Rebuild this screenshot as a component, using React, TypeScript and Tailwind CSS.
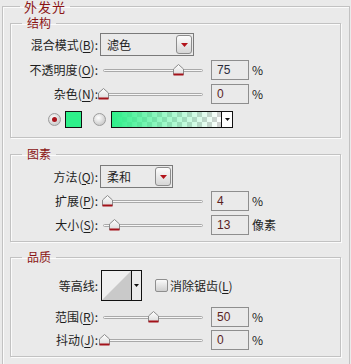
import React from "react";

const FONT = "font-['Noto_Sans_CJK_SC','Noto_Sans',sans-serif]";

const Key = ({ k }: { k: string }) => <span className="underline underline-offset-2">{k}</span>;

const Label = ({ text, k }: { text: string; k?: string }) => (
    <div className="w-[87px] shrink-0 text-right text-[12px] leading-none text-[#1e1e1e]">
        {text}
        {k ? <>(<Key k={k} />)</> : null}:
    </div>
);

const DropButton = () => (
    <div className="w-[16px] h-[19px] mr-[1px] rounded-[3px] border border-[#8c8c8c] bg-linear-to-b from-[#fdfdfd] to-[#d6d6d6] flex items-center justify-center">
        <svg width="7" height="4" viewBox="0 0 7 4">
            <polygon points="0,0 7,0 3.5,4" fill="#b3141b" />
        </svg>
    </div>
);

const Select = ({ value, w }: { value: string; w: string }) => (
    <div className={`${w} ml-[2px] h-[23px] border border-[#7a7a7a] flex items-center justify-between pl-[6px]`}>
        <span className="text-[12px] text-[#1e1e1e]">{value}</span>
        <DropButton />
    </div>
);

const Thumb = () => (
    <svg width="11" height="12" viewBox="0 0 11 12">
        <defs>
            <linearGradient id="tg" x1="0" y1="0" x2="0" y2="1">
                <stop offset="0" stopColor="#ffffff" />
                <stop offset="1" stopColor="#dcdcdc" />
            </linearGradient>
        </defs>
        <polygon points="5.5,0.5 10.5,5 10.5,10.5 0.5,10.5 0.5,5" fill="url(#tg)" stroke="#8a8a8a" />
        <rect x="0.5" y="9.5" width="10" height="2" fill="#a3121a" />
    </svg>
);

const Slider = ({ pos }: { pos: number }) => (
    <div className="relative ml-[1px] w-[108px] h-[20px] shrink-0 flex items-center">
        <div className="ml-[4px] w-[100px] h-[3px] rounded-full border border-[#a9a9a9] bg-[#f6f6f6]" />
        <div className="absolute top-[4px]" style={{ left: pos - 5 }}>
            <Thumb />
        </div>
    </div>
);

const NumBox = ({ value, unit, dark }: { value: string; unit: string; dark?: boolean }) => (
    <>
        <div className={`ml-[4px] w-[38px] h-[20px] border border-[#8e8e8e] flex items-center pl-[5px] text-[12px] font-['Liberation_Sans',sans-serif] ${dark ? "text-[#2a2d3d]" : "text-[#5a1f1f]"}`}>
            {value}
        </div>
        <span className="ml-[3px] text-[12px] text-[#1e1e1e]">{unit}</span>
    </>
);

const SliderRow = ({ text, k, pos, value, unit, dark, cls }: { text: string; k: string; pos: number; value: string; unit: string; dark?: boolean; cls: string }) => (
    <div className={`flex items-center h-[20px] ${cls}`}>
        <Label text={text} k={k} />
        <Slider pos={pos} />
        <NumBox value={value} unit={unit} dark={dark} />
    </div>
);

const Radio = ({ on }: { on?: boolean }) => (
    <div className="w-[13px] h-[13px] rounded-full border border-[#9c9c9c] bg-[radial-gradient(circle_at_40%_35%,#ffffff,#b9b9b9)] flex items-center justify-center">
        {on && <div className="w-[5px] h-[5px] rounded-full bg-[#a8141c]" />}
    </div>
);

const Group = ({ title, cls, children }: { title: string; cls: string; children: React.ReactNode }) => (
    <fieldset className={`border border-[#c2c2c2] shadow-[inset_1px_1px_0_#fbfbfb,1px_1px_0_#fbfbfb] ${cls}`}>
        <legend className="ml-[11px] px-[5px] text-[12px] leading-[12px] text-[#8a1414]">{title}</legend>
        {children}
    </fieldset>
);

export default function App() {
    return (
        <div className={`w-[351px] h-[364px] overflow-hidden bg-[#eaeaea] ${FONT}`}>
            <fieldset className="ml-[2px] w-[348px] h-[380px] border border-[#c2c2c2] shadow-[inset_1px_1px_0_#fbfbfb] pl-[7px]">
                <legend className="ml-[10px] px-[4px] text-[13px] leading-[13px] tracking-[1px] text-[#8a1414]">外发光</legend>

                <Group title="结构" cls="mt-[4px] w-[331px] pb-[9px]">
                    <div className="mt-[4px] flex items-center h-[23px]">
                        <Label text="混合模式" k="B" />
                        <Select value="滤色" w="w-[94px]" />
                    </div>
                    <SliderRow cls="mt-[4px]" text="不透明度" k="O" pos={79} value="75" unit="%" dark />
                    <SliderRow cls="mt-[4px]" text="杂色" k="N" pos={4} value="0" unit="%" />
                    <div className="mt-[7px] h-[17px] flex items-center">
                        <div className="ml-[37px]"><Radio on /></div>
                        <div className="ml-[4px] w-[17px] h-[17px] border border-[#111] bg-[#2ef08a]" />
                        <div className="ml-[11px]"><Radio /></div>
                        <div className="ml-[5px] w-[122px] h-[17px] border border-[#111] flex">
                            <div className="flex-1 bg-[repeating-conic-gradient(#d2d2d2_0_25%,#ffffff_0_50%)] bg-[length:10px_10px]">
                                <div className="h-full bg-linear-to-r from-[#2ef08a] via-[#2ef08a]/45 to-[#2ef08a]/0" />
                            </div>
                            <div className="w-[11px] border-l border-[#111] bg-white flex items-center justify-center">
                                <svg width="5" height="3" viewBox="0 0 5 3"><polygon points="0,0 5,0 2.5,3" fill="#111" /></svg>
                            </div>
                        </div>
                    </div>
                </Group>

                <Group title="图素" cls="mt-[10px] w-[331px] pb-[6px]">
                    <div className="mt-[5px] flex items-center h-[23px]">
                        <Label text="方法" k="Q" />
                        <Select value="柔和" w="w-[73px]" />
                    </div>
                    <SliderRow cls="mt-[3px]" text="扩展" k="P" pos={8} value="4" unit="%" />
                    <SliderRow cls="mt-[4px]" text="大小" k="S" pos={15} value="13" unit="像素" />
                </Group>

                <Group title="品质" cls="mt-[9px] w-[331px] pb-[6px]">
                    <div className="mt-[7px] h-[31px] flex items-center">
                        <Label text="等高线" />
                        <div className="ml-[3px] w-[41px] h-[31px] border border-[#111] flex">
                            <svg width="29" height="29" viewBox="0 0 29 29" className="bg-[#efefef]">
                                <polygon points="0,29 29,0 29,29" fill="#c9c9c9" />
                            </svg>
                            <div className="flex-1 border-l border-[#111] flex items-center justify-center">
                                <svg width="5" height="3" viewBox="0 0 5 3"><polygon points="0,0 5,0 2.5,3" fill="#111" /></svg>
                            </div>
                        </div>
                        <div className="ml-[13px] w-[13px] h-[13px] rounded-[2px] border border-[#8e8e8e] bg-linear-to-b from-[#fafafa] to-[#cfcfcf]" />
                        <span className="ml-[2px] text-[12px] text-[#1e1e1e]">消除锯齿(<Key k="L" />)</span>
                    </div>
                    <SliderRow cls="mt-[6px]" text="范围" k="R" pos={54} value="50" unit="%" />
                    <SliderRow cls="mt-[3px]" text="抖动" k="J" pos={5} value="0" unit="%" />
                </Group>
            </fieldset>
        </div>
    );
}
